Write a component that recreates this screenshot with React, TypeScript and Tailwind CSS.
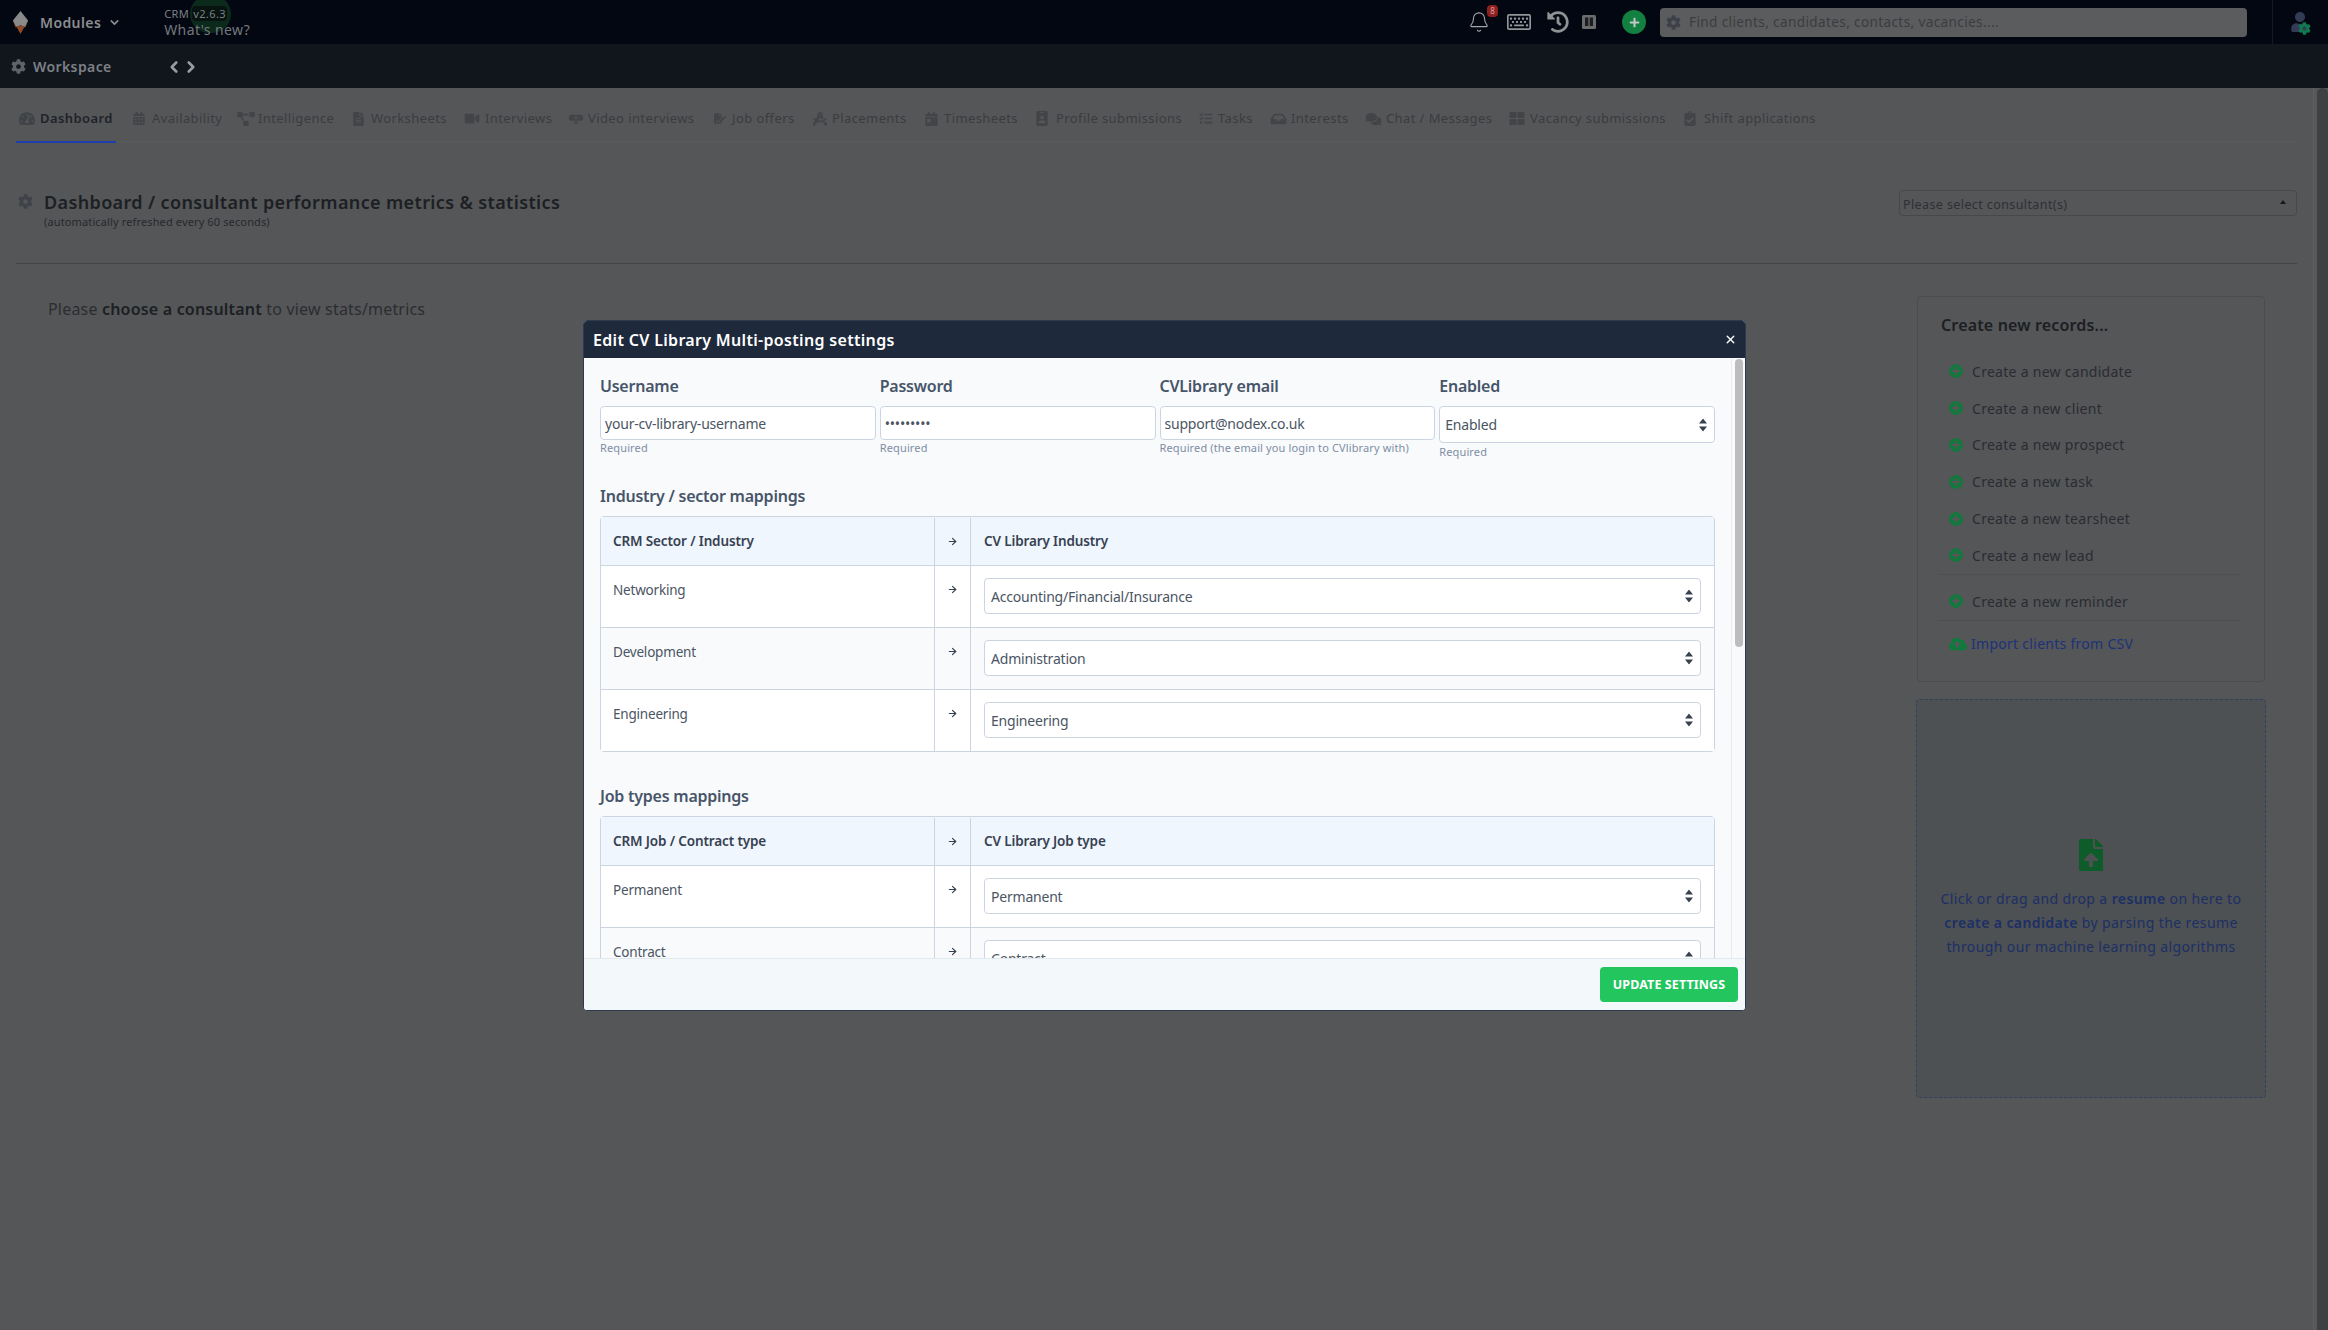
import { ArrowRight, Bell, ChevronDown, ChevronLeft, ChevronRight, X } from 'lucide-react';
import {
  FaCalendarAlt,
  FaCalendarDay,
  FaClipboardCheck,
  FaCloudUploadAlt,
  FaCog,
  FaComments,
  FaDraftingCompass,
  FaFileAlt,
  FaFileSignature,
  FaFileUpload,
  FaHistory,
  FaIdBadge,
  FaInbox,
  FaPlus,
  FaPlusCircle,
  FaProjectDiagram,
  FaRegKeyboard,
  FaTachometerAlt,
  FaTasks,
  FaThLarge,
  FaUser,
  FaVideo,
} from 'react-icons/fa';
import { BsWebcamFill } from 'react-icons/bs';

const tabs = [
  { label: 'Dashboard', icon: FaTachometerAlt, iconClass: 'w-[16px] h-[15px]', active: true, gap: 'ml-[3px] mr-[5px]', width: 'w-[117px]' },
  { label: 'Availability', icon: FaCalendarAlt, iconClass: 'w-[12px] h-[13px]', gap: 'mr-[7px]', width: 'w-[104px]' },
  { label: 'Intelligence', icon: FaProjectDiagram, iconClass: 'w-[18px] h-[14px]', gap: 'mr-[3px]', width: 'w-[116px]' },
  { label: 'Worksheets', icon: FaFileAlt, iconClass: 'w-[11px] h-[14px]', gap: 'mr-[7px]', width: 'w-[110px]' },
  { label: 'Interviews', icon: FaVideo, iconClass: 'w-[18px] h-[13px]', gap: 'mr-[4px]', width: 'w-[106px]' },
  { label: 'Video interviews', icon: BsWebcamFill, iconClass: 'w-[14px] h-[16px]', gap: 'mr-[5px]', width: 'w-[145px]' },
  { label: 'Job offers', icon: FaFileSignature, iconClass: 'w-[12px] h-[15px]', gap: 'mr-[6px]', width: 'w-[98px]' },
  { label: 'Placements', icon: FaDraftingCompass, iconClass: 'w-[16px] h-[14px]', gap: 'mr-[4px]', width: 'w-[113px]' },
  { label: 'Timesheets', icon: FaCalendarDay, iconClass: 'w-[13px] h-[14px]', gap: 'mr-[6px]', width: 'w-[111px]' },
  { label: 'Profile submissions', icon: FaIdBadge, iconClass: 'w-[12px] h-[15px]', gap: 'mr-[8px]', width: 'w-[163px]' },
  { label: 'Tasks', icon: FaTasks, iconClass: 'w-[14px] h-[13px]', gap: 'mr-[5px]', width: 'w-[71px]' },
  { label: 'Interests', icon: FaInbox, iconClass: 'w-[17px] h-[14px]', gap: 'mr-[4px]', width: 'w-[95px]' },
  { label: 'Chat / Messages', icon: FaComments, iconClass: 'w-[17px] h-[14px]', gap: 'mr-[4px]', width: 'w-[144px]' },
  { label: 'Vacancy submissions', icon: FaThLarge, iconClass: 'w-[16px] h-[15px]', gap: 'mr-[5px]', width: 'w-[175px]' },
  { label: 'Shift applications', icon: FaClipboardCheck, iconClass: 'w-[12px] h-[15px]', gap: 'mr-[8px]', width: 'w-[130px]' },
];

const createItems = ['candidate', 'client', 'prospect', 'task', 'tearsheet', 'lead'];

function SortIcon() {
  return (
    <svg viewBox="0 0 8 13" className="absolute right-[8px] top-1/2 h-[13px] w-[8px] -translate-y-1/2 fill-[#374151]">
      <path d="M4 0 8 5H0zM4 13 0 8h8z" />
    </svg>
  );
}

function Field({ label, value, help, type = 'text' }: { label: string; value: string; help: string; type?: string }) {
  return (
    <div>
      <label className="mb-[9px] block text-[16px] leading-[22px] font-semibold tracking-[-0.015em] text-[#475569]">{label}</label>
      <input
        type={type}
        readOnly
        value={value}
        className="h-[34px] w-full rounded border border-[#cbd5e1] bg-white px-1 text-[14px] tracking-[-0.015em] text-[#4b5563] outline-none"
      />
      <p className="mt-px text-[11px] leading-[14px] tracking-[0.012em] text-[#7f8ea3]">{help}</p>
    </div>
  );
}

function MapSelect({ value }: { value: string }) {
  return (
    <div className="relative h-[36px]">
      <select
        value={value}
        onChange={() => {}}
        className="h-full w-full appearance-none rounded border border-[#cbd5e1] bg-white pl-[6px] pt-px text-[14px] tracking-[-0.015em] text-[#4b5563] outline-none"
      >
        <option>{value}</option>
      </select>
      <SortIcon />
    </div>
  );
}

function MappingTable({ left, right, rows }: { left: string; right: string; rows: string[][] }) {
  return (
    <div className="mt-[9px] rounded border border-[#cbd5e1] text-[13.5px] tracking-[-0.015em]">
      <div className="flex h-[49px] items-center border-b border-[#cbd5e1] bg-[#eff6fd] pt-px font-semibold tracking-[-0.01em] text-[#374151]">
        <div className="flex h-full w-[334px] items-center border-r border-[#cbd5e1] pl-[12px]">{left}</div>
        <div className="flex h-full w-[36px] items-center justify-center border-r border-[#cbd5e1]">
          <ArrowRight size={11} strokeWidth={2.5} />
        </div>
        <div className="pl-[13px]">{right}</div>
      </div>
      {rows.map(([from, to], i) => (
        <div key={from} className={`flex h-[62px] border-b border-[#cbd5e1] last:h-[61px] last:border-b-0 ${i % 2 ? 'bg-[#f8fafc]' : 'bg-white'}`}>
          <div className="h-full w-[334px] border-r border-[#cbd5e1] pl-[12px] pt-[14px] leading-5 text-[#4b5563]">{from}</div>
          <div className="flex h-full w-[36px] justify-center border-r border-[#cbd5e1] pt-[18px] text-[#374151]">
            <ArrowRight size={11} strokeWidth={2.5} />
          </div>
          <div className="flex-1 px-[13px] pt-[12px]">
            <MapSelect value={to} />
          </div>
        </div>
      ))}
    </div>
  );
}

function SettingsModal() {
  return (
    <div className="absolute inset-x-0 top-[320px] flex justify-center pl-[1px]">
      <div className="w-[1163px] overflow-hidden rounded-sm border border-[#2f3b4d] bg-[#f8fafc]">
        <div className="flex h-[37px] items-center justify-between bg-[#1e293b] pl-[9px] pr-[8px]">
          <h2 className="text-[16px] font-semibold tracking-[0.02em] text-white">Edit CV Library Multi-posting settings</h2>
          <X size={13} strokeWidth={2.5} className="text-white" />
        </div>

        <div className="relative h-[600px] overflow-hidden pl-[16px] pr-[30px] pt-[17px]">
          <div className="grid grid-cols-4 items-start gap-1">
            <Field label="Username" value="your-cv-library-username" help="Required" />
            <Field label="Password" value="ninechars" help="Required" type="password" />
            <Field label="CVLibrary email" value="support@nodex.co.uk" help="Required (the email you login to CVlibrary with)" />
            <div>
              <label className="mb-[9px] block text-[16px] leading-[22px] font-semibold tracking-[-0.015em] text-[#475569]">Enabled</label>
              <div className="relative h-[37px]">
                <select
                  value="Enabled"
                  onChange={() => {}}
                  className="h-full w-full appearance-none rounded border border-[#cbd5e1] bg-white pl-[5px] text-[14px] tracking-[-0.015em] text-[#4b5563] outline-none"
                >
                  <option>Enabled</option>
                </select>
                <SortIcon />
              </div>
              <p className="mt-[2px] text-[11px] leading-[14px] tracking-[0.012em] text-[#7f8ea3]">Required</p>
            </div>
          </div>

          <h3 className="mt-[26px] text-[16px] leading-[22px] font-semibold tracking-[-0.015em] text-[#475569]">Industry / sector mappings</h3>
          <MappingTable
            left="CRM Sector / Industry"
            right="CV Library Industry"
            rows={[
              ['Networking', 'Accounting/Financial/Insurance'],
              ['Development', 'Administration'],
              ['Engineering', 'Engineering'],
            ]}
          />

          <h3 className="mt-[33px] text-[16px] leading-[22px] font-semibold tracking-[-0.015em] text-[#475569]">Job types mappings</h3>
          <MappingTable
            left="CRM Job / Contract type"
            right="CV Library Job type"
            rows={[
              ['Permanent', 'Permanent'],
              ['Contract', 'Contract'],
            ]}
          />

          {/* scrollbar of the modal body */}
          <div className="absolute inset-y-0 right-0 w-[14px] border-l border-[#e8ecf1] bg-[#f8fafc]">
            <div className="ml-[3px] mt-px h-[288px] w-[8px] rounded-full bg-[#bdbdbd]" />
          </div>
        </div>

        <div className="flex h-[52px] items-start justify-end border-t border-[#e2e8f0] bg-[#f3f9fb] pr-[7px] pt-[8px]">
          <button className="h-[35px] w-[138px] rounded bg-[#22c55e] pt-px text-[12.5px] font-bold tracking-[0.1px] text-white uppercase">
            Update settings
          </button>
        </div>
      </div>
    </div>
  );
}

export default function App() {
  return (
    <div className="relative flex h-[1330px] w-full flex-col overflow-hidden bg-[#555658] tracking-wide [font-family:'Noto_Sans',sans-serif]">
      {/* top bar */}
      <header className="flex h-[44px] shrink-0 items-center bg-[#030712]">
        <svg viewBox="0 0 20 24" className="ml-[11px] h-[23px] w-[19px]">
          <path d="M10 0 18 10 15 17 10 15 5 17 2 10z" fill="#8a8a8a" />
          <path d="M2 10 5 17 10 15 15 17 18 10 10 24z" fill="#8f4a26" />
        </svg>
        <span className="ml-[10px] text-[14px] font-semibold text-[#8b8d90]">Modules</span>
        <ChevronDown size={13} strokeWidth={3} className="ml-[7px] text-[#8b8d90]" />
        <div className="ml-[43px] flex flex-col pt-[1px]">
          <span className="relative text-[11px] leading-[14px] text-[#7d8085]">
            CRM
            <span className="absolute left-[26px] top-[-12px] h-[38px] w-[41px] rounded-full bg-[#0b2a1b]" />
            <span className="relative ml-[3px] rounded-sm bg-[#07130f] px-px">v2.6.3</span>
          </span>
          <span className="relative text-[14px] leading-[18px] text-[#75787d]">What's new?</span>
        </div>

        <div className="ml-auto flex items-center">
          <div className="relative">
            <Bell size={22} strokeWidth={1.2} className="text-[#a3a5a8]" />
            <span className="absolute right-[-8px] top-[-6px] flex h-[12px] w-[11px] items-center justify-center rounded-sm bg-[#8f2020] text-[8px] tracking-normal text-[#d8a0a0]">8</span>
          </div>
          <FaRegKeyboard size={24} className="ml-[17px] text-[#939598]" />
          <FaHistory size={22} className="ml-[16px] text-[#8f9194]" />
          <svg viewBox="0 0 14 14" className="ml-[13px] h-[14px] w-[14px]">
            <rect width="14" height="14" rx="1.5" fill="#6a6b6d" />
            <rect x="3" y="2.5" width="3.3" height="8.5" fill="#1c1d20" />
            <rect x="7.7" y="2.5" width="3.3" height="8.5" fill="#1c1d20" />
          </svg>
          <span className="ml-[26px] flex h-[24px] w-[24px] items-center justify-center rounded-full bg-[#118040]">
            <FaPlus size={11} className="text-[#c3c7c5]" />
          </span>
          <div className="ml-[14px] flex h-[29px] w-[587px] items-center rounded-sm bg-[#5b5c5e] pl-[6px] text-[13.5px] text-[#3a3c3f]">
            <FaCog size={15} className="text-[#3f414a]" />
            <span className="ml-[8px]">Find clients, candidates, contacts, vacancies....</span>
          </div>
          <div className="relative ml-[25px] flex h-[44px] w-[56px] items-center border-l border-[#16191f] pl-[17px]">
            <FaUser size={20} className="text-[#333c55]" />
            <FaCog size={13} className="absolute left-[25px] top-[22px] text-[#0f7a4e]" />
          </div>
        </div>
      </header>

      {/* workspace bar */}
      <div className="flex h-[44px] shrink-0 items-center bg-[#11161d] pt-px text-[#7d8085]">
        <FaCog size={15} className="ml-[11px] text-[#5f6268]" />
        <span className="ml-[7px] text-[14px] font-semibold">Workspace</span>
        <ChevronLeft size={18} strokeWidth={3.5} className="ml-[53px] text-[#9a9ca0]" />
        <ChevronRight size={18} strokeWidth={3.5} className="-ml-px text-[#9a9ca0]" />
      </div>

      <div className="flex min-h-0 flex-1">
        <main className="flex-1 px-4">
          {/* tabs */}
          <nav className="flex h-[54px] border-b border-[#5a5b5c] text-[13px] text-[#3a3c40]">
            {tabs.map((tab) => (
              <a
                key={tab.label}
                className={`relative flex h-[54px] shrink-0 items-center pt-[7px] ${tab.width} ${tab.active ? 'font-semibold text-[#1f2329]' : ''}`}
              >
                <tab.icon className={`shrink-0 ${tab.gap} ${tab.iconClass} ${tab.active ? 'text-[#3f4247]' : 'text-[#424448]'}`} />
                <span className="whitespace-nowrap">{tab.label}</span>
                {tab.active && <span className="absolute bottom-[-1px] left-0 h-[2px] w-[100px] bg-[#1e40af]" />}
              </a>
            ))}
          </nav>

          {/* page heading */}
          <div className="flex h-[122px] items-start justify-between border-b border-[#434446] pt-[48px]">
            <div className="flex">
              <FaCog size={15} className="ml-[2px] mt-[4px] text-[#3f4249]" />
              <div className="ml-[11px]">
                <h1 className="text-[18px] leading-[24px] font-semibold tracking-[0.02em] text-[#1c1f23]">Dashboard / consultant performance metrics &amp; statistics</h1>
                <p className="pt-px text-[11px] leading-[14px] tracking-[0.012em] text-[#27292d]">(automatically refreshed every 60 seconds)</p>
              </div>
            </div>
            <div className="relative flex h-[26px] w-[398px] items-center rounded-sm border border-[#47484a] pl-[3px] pt-[5px] text-[12.5px] text-[#2e3034]">
              Please select consultant(s)
              <svg viewBox="0 0 6 4" className="absolute right-[10px] top-[9px] h-[4px] w-[6px] fill-[#16181b]">
                <path d="M3 0 6 4H0z" />
              </svg>
            </div>
          </div>

          <div className="flex items-start justify-between">
            <p className="pl-[32px] pt-[34px] text-[16px] leading-[22px] tracking-[0.012em] text-[#2b2d31]">
              Please <strong className="font-semibold text-[#1c1f23]">choose a consultant</strong> to view stats/metrics
            </p>

            <aside className="mr-[31px] mt-[32px] flex w-[350px] flex-col">
              <div className="mx-px h-[386px] rounded border border-[#4a4c4e] pl-[23px] pr-[23px] pt-[16px]">
                <h2 className="text-[16px] leading-[24px] font-semibold tracking-[0.01em] text-[#1c1e22]">Create new records...</h2>
                <ul className="mt-[16px] text-[14px] tracking-[0.02em] text-[#2a2c32]">
                  {createItems.map((item) => (
                    <li key={item} className="flex h-[36.8px] items-center pl-[8px]">
                      <FaPlusCircle size={14} className="mr-[9px] text-[#0f7a3c]" />
                      Create a new {item}
                    </li>
                  ))}
                </ul>
                <div className="-ml-[3px] border-y border-[#4e4f51] pl-[11px] pt-[8px] text-[14px] tracking-[0.02em] text-[#2a2c32]">
                  <div className="flex h-[37px] items-center">
                    <FaPlusCircle size={14} className="mr-[9px] text-[#0f7a3c]" />
                    Create a new reminder
                  </div>
                </div>
                <a className="flex h-[46px] items-center pl-[8px] text-[14px] tracking-[0.02em] text-[#1c3278]">
                  <FaCloudUploadAlt size={18} className="mr-[4px] text-[#0f7a3c]" />
                  Import clients from CSV
                </a>
              </div>

              <div className="mt-[17px] flex h-[399px] flex-col items-center rounded-sm border border-dashed border-[#324060] bg-[#4d5153] pt-[139px]">
                <FaFileUpload className="h-[32px] w-[24px] text-[#0f5c2b]" />
                <p className="mt-[16px] w-[320px] text-center text-[14px] leading-[24px] text-[#1c2f66]">
                  Click or drag and drop a <strong className="font-semibold">resume</strong> on here to{' '}
                  <strong className="font-semibold">create a candidate</strong> by parsing the resume through our machine learning algorithms
                </p>
              </div>
            </aside>
          </div>
        </main>

        {/* page scrollbar */}
        <div className="w-[15px] shrink-0 border-l border-[#5e5f61] bg-[#57585a] pl-[3px]">
          <div className="h-full rounded-t-md bg-[#3f4042]" />
        </div>
      </div>

      <SettingsModal />
    </div>
  );
}
